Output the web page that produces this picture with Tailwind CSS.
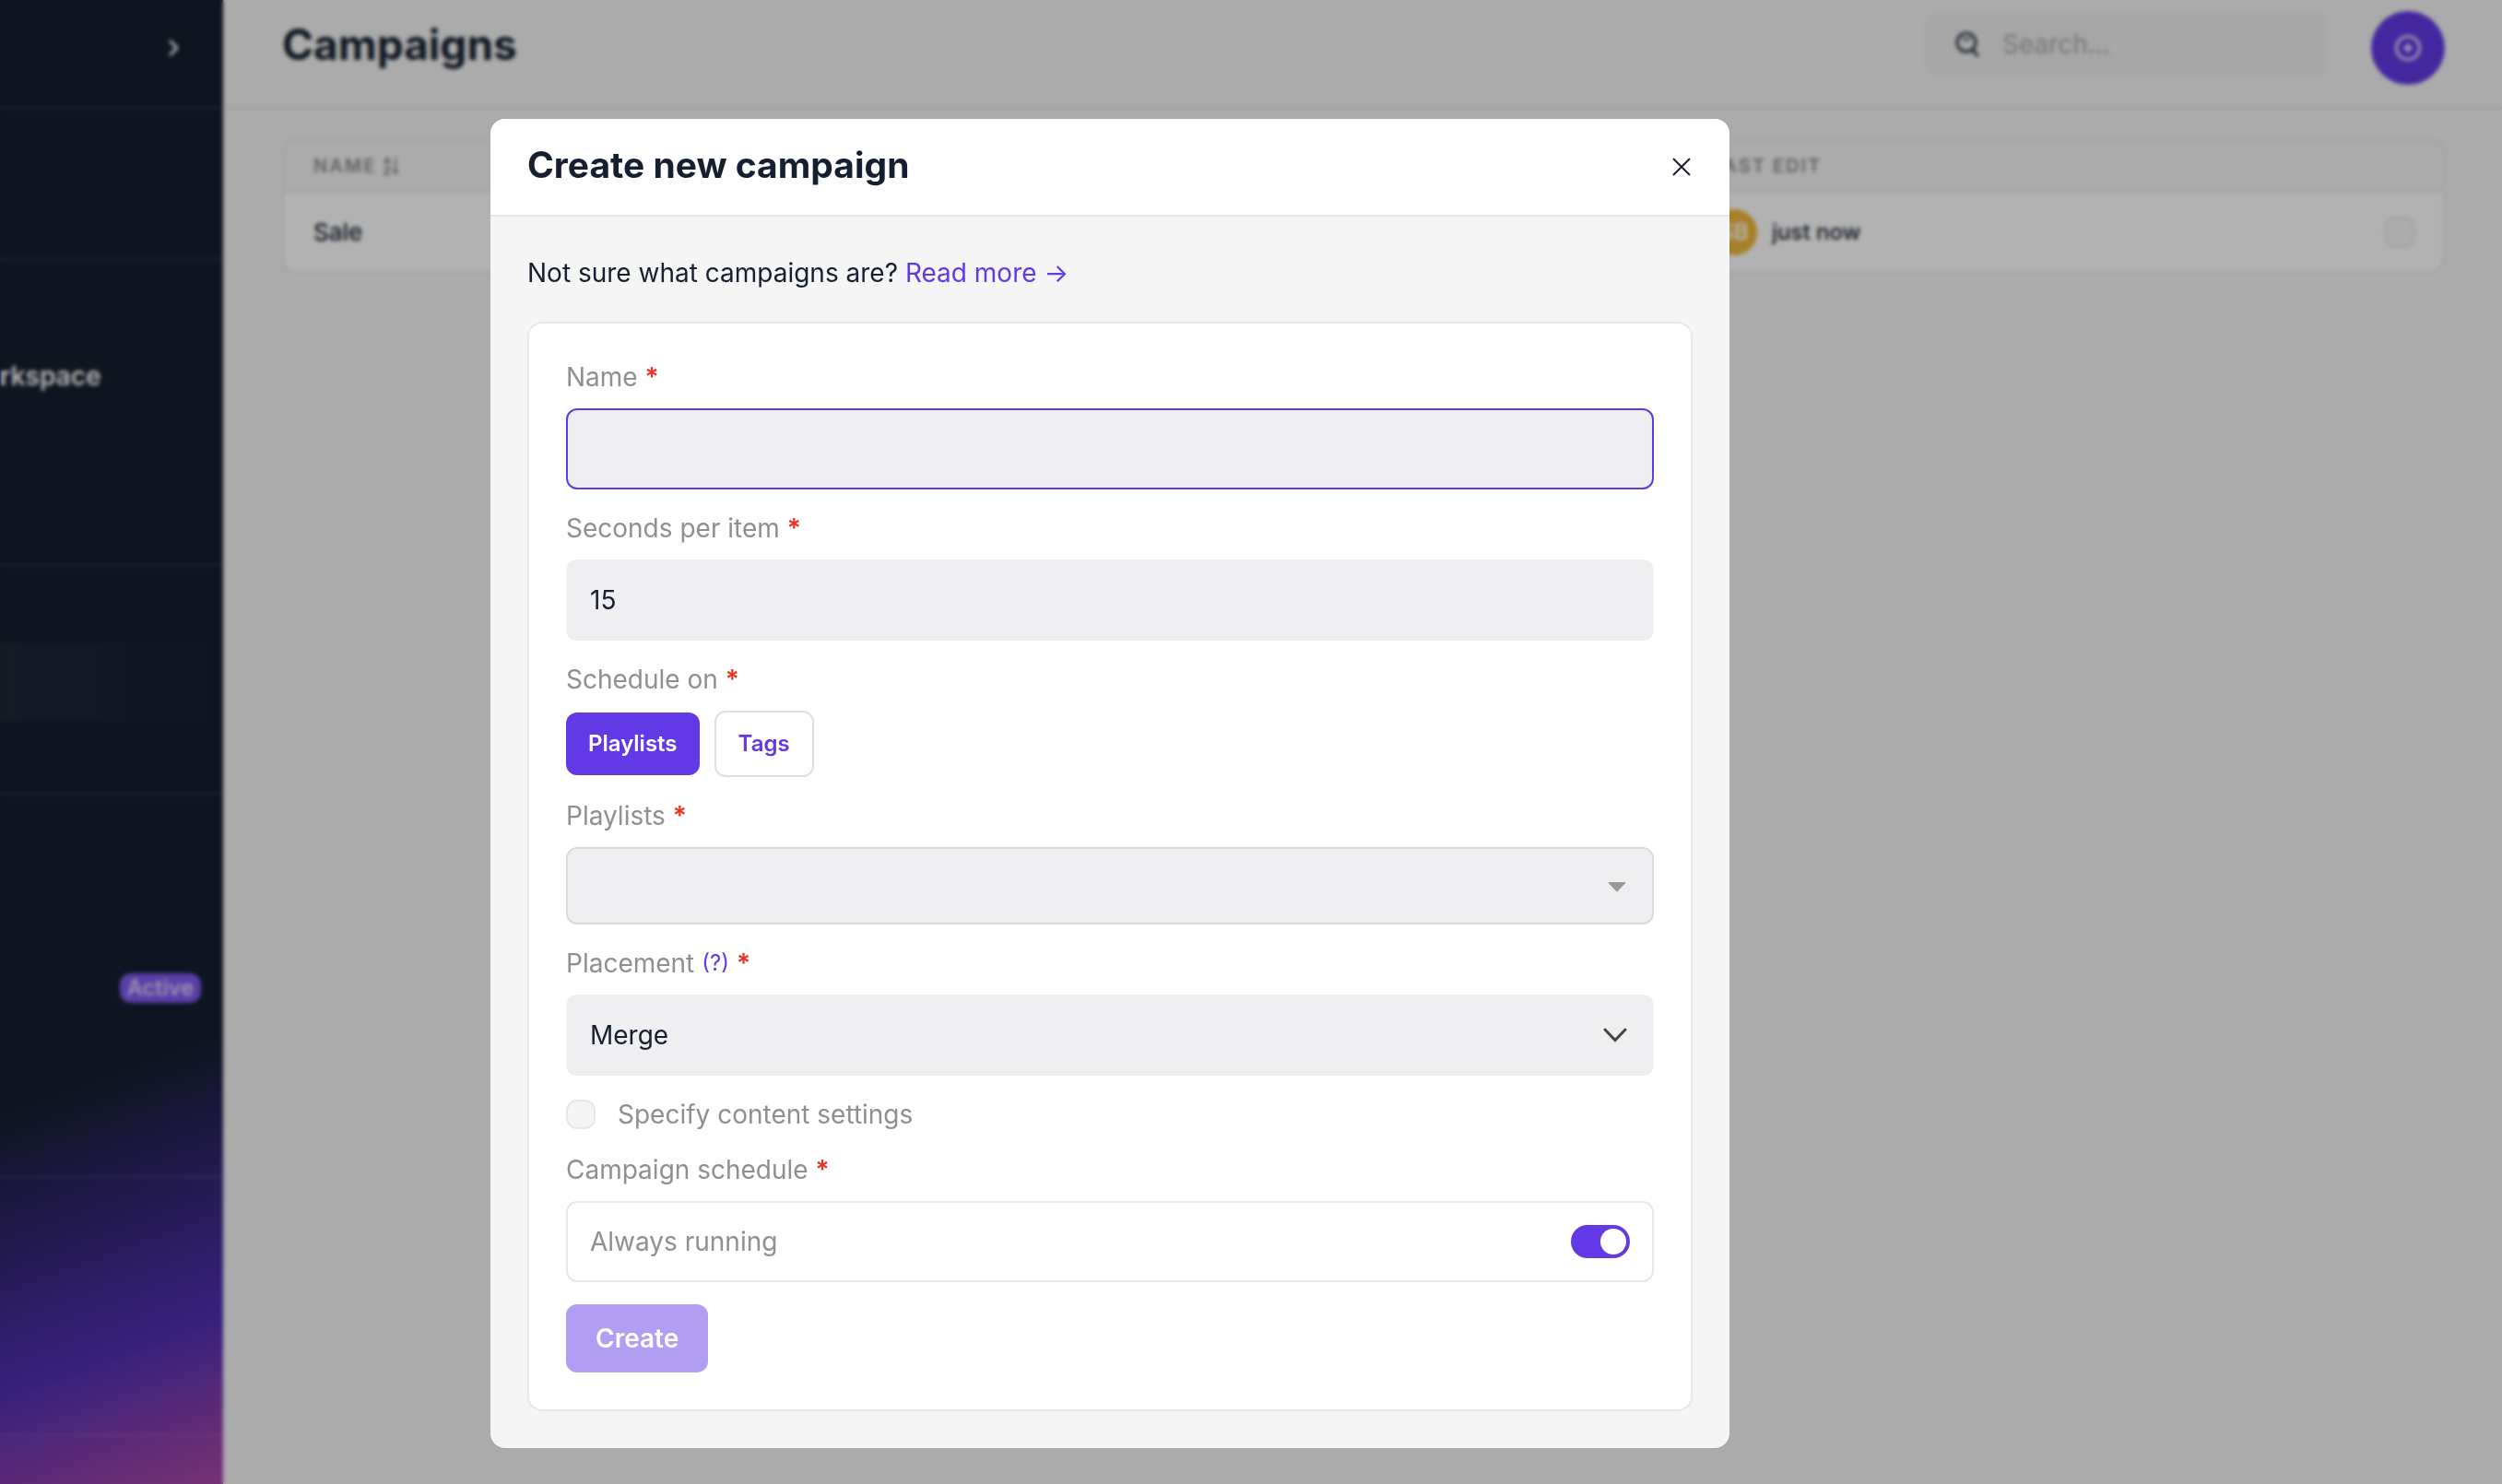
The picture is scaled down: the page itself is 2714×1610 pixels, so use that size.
<!DOCTYPE html>
<html lang="en">

<head>
    <meta charset="UTF-8">
    <meta name="viewport" content="width=device-width, initial-scale=1.0">
    <title>Campaigns</title>
    <script src="https://cdn.jsdelivr.net/npm/@tailwindcss/browser@4"></script>
</head>

<body class="relative min-h-screen overflow-hidden bg-[#f5f5f5] font-['Inter',sans-serif] text-[#151f30]">
    <div class="flex min-h-screen">
        <!-- Sidebar -->
        <aside class="flex w-[242px] shrink-0 flex-col overflow-hidden bg-linear-[160deg,#151e2f_0%,#151e2f_71%,#502eb5_89%,#aa48a4_100%] text-white">
            <div class="flex h-[118px] items-start justify-end border-b-2 border-white/10 pt-10 pr-[42px]">
                <button type="button" aria-label="Collapse sidebar">
                    <svg class="size-6" viewBox="0 0 24 24" fill="none" stroke="currentColor" stroke-width="3" stroke-linecap="round" stroke-linejoin="round">
                        <path d="M9 5l7 7-7 7" />
                    </svg>
                </button>
            </div>
            <div class="h-[164px] border-b-2 border-white/10"></div>
            <div class="h-[332px] border-b-2 border-white/10 pt-[108px]">
                <span class="text-[28px] leading-9 font-semibold">rkspace</span>
            </div>
            <div class="h-[248px] border-b-2 border-white/10 pt-[84px]">
                <div class="h-[84px] bg-linear-to-r from-white/4 to-transparent"></div>
            </div>
            <div class="flex h-[416px] items-start justify-end border-b-2 border-white/10 pt-[194px] pr-6">
                <span class="rounded-xl bg-[#825af0] px-2 text-[24px] leading-8 font-medium text-white/80">Active</span>
            </div>
            <div class="h-[280px] border-b-2 border-white/10"></div>
        </aside>

        <!-- Page -->
        <main class="min-w-0 flex-1">
            <header class="flex h-[118px] items-start justify-between border-b-2 border-[#e2e2e6] pr-[62px] pl-16">
                <h1 class="pt-[18px] text-[46px] leading-[60px] font-bold">Campaigns</h1>
                <div class="flex items-start gap-12 pt-3">
                    <label class="flex h-[72px] w-[436px] items-center gap-6 rounded-2xl bg-[#efeff1] px-8">
                        <svg class="size-7 shrink-0 text-[#2c3545]" viewBox="0 0 28 28" fill="none" stroke="currentColor" stroke-width="3" stroke-linecap="round">
                            <circle cx="13" cy="12" r="10" />
                            <path d="M20 20l5 6" />
                            <path stroke-width="2" d="M9.500 7.500q3.500 3 7 0" />
                        </svg>
                        <input type="search" aria-label="Search" placeholder="Search..." class="w-full min-w-0 bg-transparent text-[28px] outline-none placeholder:text-[#a8a8a8]">
                    </label>
                    <button type="button" aria-label="Create campaign" class="flex size-20 items-center justify-center rounded-full bg-[#6339e5] text-white">
                        <svg class="size-7" viewBox="0 0 28 28" fill="none" stroke="currentColor" stroke-width="2.500" stroke-linecap="round">
                            <circle cx="14" cy="14" r="12.500" />
                            <path d="M14 10v8M10 14h8" />
                        </svg>
                    </button>
                </div>
            </header>

            <div class="pt-8 pr-[62px] pl-16">
                <div class="overflow-hidden rounded-2xl border-2 border-[#e8e8ea] bg-white">
                    <table class="w-full table-fixed text-left">
                        <thead>
                            <tr class="h-[56px] border-b-2 border-[#e8e8ea] bg-[#f5f5f5] text-[20px] leading-7 tracking-widest text-[#8f8f8f]">
                                <th class="pl-8 font-semibold">
                                    <span class="flex items-center gap-2">NAME
                                        <svg class="size-5" viewBox="0 0 20 20" fill="none" stroke="currentColor" stroke-width="2">
                                            <path d="M1 8l3-7 3 7M2 6h4M1 12h6l-6 7h6M13 1v17M10 15l3 3 3-3" />
                                        </svg>
                                    </span>
                                </th>
                                <th class="w-[794px] font-semibold">LAST EDIT</th>
                            </tr>
                        </thead>
                        <tbody>
                            <tr class="h-[86px] font-medium">
                                <td class="pl-8 text-[26px]">Sale</td>
                                <td class="pr-[30px] text-[24px]">
                                    <div class="flex items-center gap-4">
                                        <span class="flex size-[50px] items-center justify-center rounded-full bg-[#f0b93a] font-semibold text-white">SB</span>
                                        <span class="flex-1">just now</span>
                                        <input type="checkbox" aria-label="Select Sale" class="size-[34px] appearance-none rounded-xl border-2 border-[#e6e6ea] bg-[#f5f5f5]">
                                    </div>
                                </td>
                            </tr>
                        </tbody>
                    </table>
                </div>
            </div>
        </main>
    </div>

    <!-- Modal -->
    <div class="absolute inset-0 flex items-start justify-center bg-black/30 pt-[129px] pr-[306px] backdrop-blur-[2px]">
        <section role="dialog" aria-modal="true" aria-labelledby="modal-title" class="w-full max-w-[1344px] overflow-hidden rounded-2xl bg-[#f5f5f5]">
            <div class="flex h-[106px] items-center justify-between border-b-2 border-[#e6e6ec] bg-white px-10">
                <h2 id="modal-title" class="pb-1 text-[39px] leading-[48px] font-bold">Create new campaign</h2>
                <button type="button" aria-label="Close">
                    <svg class="size-6" viewBox="0 0 24 24" fill="none" stroke="currentColor" stroke-width="2">
                        <path d="M3 3l18 18M21 3L3 21" />
                    </svg>
                </button>
            </div>

            <div class="p-10">
                <p class="mb-8 text-[28px] leading-[42px]">Not sure what campaigns are? <a href="#" class="text-[#6339e5]">Read more →</a></p>

                <form class="flex flex-col gap-6 rounded-2xl border-2 border-[#e8e8e8] bg-white p-10 text-[28px] leading-9">
                    <div class="flex flex-col gap-4">
                        <label for="name" class="text-[#8f8f8f]">Name <span class="font-semibold text-[#eb3223]">*</span></label>
                        <input id="name" type="text" class="h-[88px] w-full rounded-xl border-2 border-[#6339e5] bg-[#efeff1] px-6 text-[#151f30] outline-none">
                    </div>

                    <div class="flex flex-col gap-4">
                        <label for="seconds" class="text-[#8f8f8f]">Seconds per item <span class="font-semibold text-[#eb3223]">*</span></label>
                        <input id="seconds" type="text" inputmode="numeric" value="15" class="h-[88px] w-full rounded-xl border-2 border-[#efeff1] bg-[#efeff1] px-6 text-[#151f30] outline-none">
                    </div>

                    <div role="group" aria-labelledby="schedule-on" class="flex flex-col gap-4">
                        <span id="schedule-on" class="text-[#8f8f8f]">Schedule on <span class="font-semibold text-[#eb3223]">*</span></span>
                        <div class="flex items-center gap-4 text-[24px] leading-9 font-semibold">
                            <button type="button" class="rounded-xl bg-[#6339e5] px-6 py-4 text-white">Playlists</button>
                            <button type="button" class="rounded-xl border-2 border-[#dedee4] px-6 py-4 text-[#6339e5]">Tags</button>
                        </div>
                    </div>

                    <div class="flex flex-col gap-4">
                        <label for="playlists" class="text-[#8f8f8f]">Playlists <span class="font-semibold text-[#eb3223]">*</span></label>
                        <div class="relative">
                            <select id="playlists" class="block h-[84px] w-full appearance-none rounded-xl border-2 border-[#dadadd] bg-[#efeff1] px-6 outline-none">
                                <option></option>
                            </select>
                            <svg class="pointer-events-none absolute top-[37px] right-7 h-3 w-6 text-[#999]" viewBox="0 0 24 12" fill="currentColor">
                                <path d="M3 2.200Q2.300 1 3.500 1h17q1.200 0 .5 1.200L12.800 11q-.8.800-1.600 0z" />
                            </svg>
                        </div>
                    </div>

                    <div class="flex flex-col gap-4">
                        <div class="flex items-center gap-2 text-[#8f8f8f]">
                            <label for="placement">Placement</label>
                            <a href="#" class="text-[24px] text-[#6339e5]">(?)</a>
                            <span class="font-semibold text-[#eb3223]">*</span>
                        </div>
                        <div class="relative">
                            <select id="placement" class="block h-[88px] w-full appearance-none rounded-xl border-2 border-[#efeff1] bg-[#efeff1] px-6 text-[#151f30] outline-none">
                                <option>Merge</option>
                            </select>
                            <svg class="pointer-events-none absolute top-8 right-7 size-7 text-[#444]" viewBox="0 0 28 28" fill="none" stroke="currentColor" stroke-width="3" stroke-linecap="round">
                                <path d="M3 6l11 11.500L25 6" />
                            </svg>
                        </div>
                    </div>

                    <div class="flex items-center gap-6 text-[#8f8f8f]">
                        <input id="content-settings" type="checkbox" class="size-8 appearance-none rounded-xl border-2 border-[#e6e6ec] bg-[#f5f5f5]">
                        <label for="content-settings">Specify content settings</label>
                    </div>

                    <div role="group" aria-labelledby="campaign-schedule" class="flex flex-col gap-4 text-[#8f8f8f]">
                        <span id="campaign-schedule">Campaign schedule <span class="font-semibold text-[#eb3223]">*</span></span>
                        <div class="flex h-[88px] items-center justify-between rounded-xl border-2 border-[#e6e6ec] px-6">
                            <label for="always">Always running</label>
                            <input id="always" type="checkbox" role="switch" checked class="flex h-9 w-16 appearance-none items-center rounded-full bg-[#6339e5] px-1 before:size-7 before:rounded-full before:bg-white checked:justify-end">
                        </div>
                    </div>

                    <button type="submit" disabled class="self-start rounded-xl bg-[#b19df2] px-8 py-[19px] font-semibold text-white">Create</button>
                </form>
            </div>
        </section>
    </div>
</body>

</html>
